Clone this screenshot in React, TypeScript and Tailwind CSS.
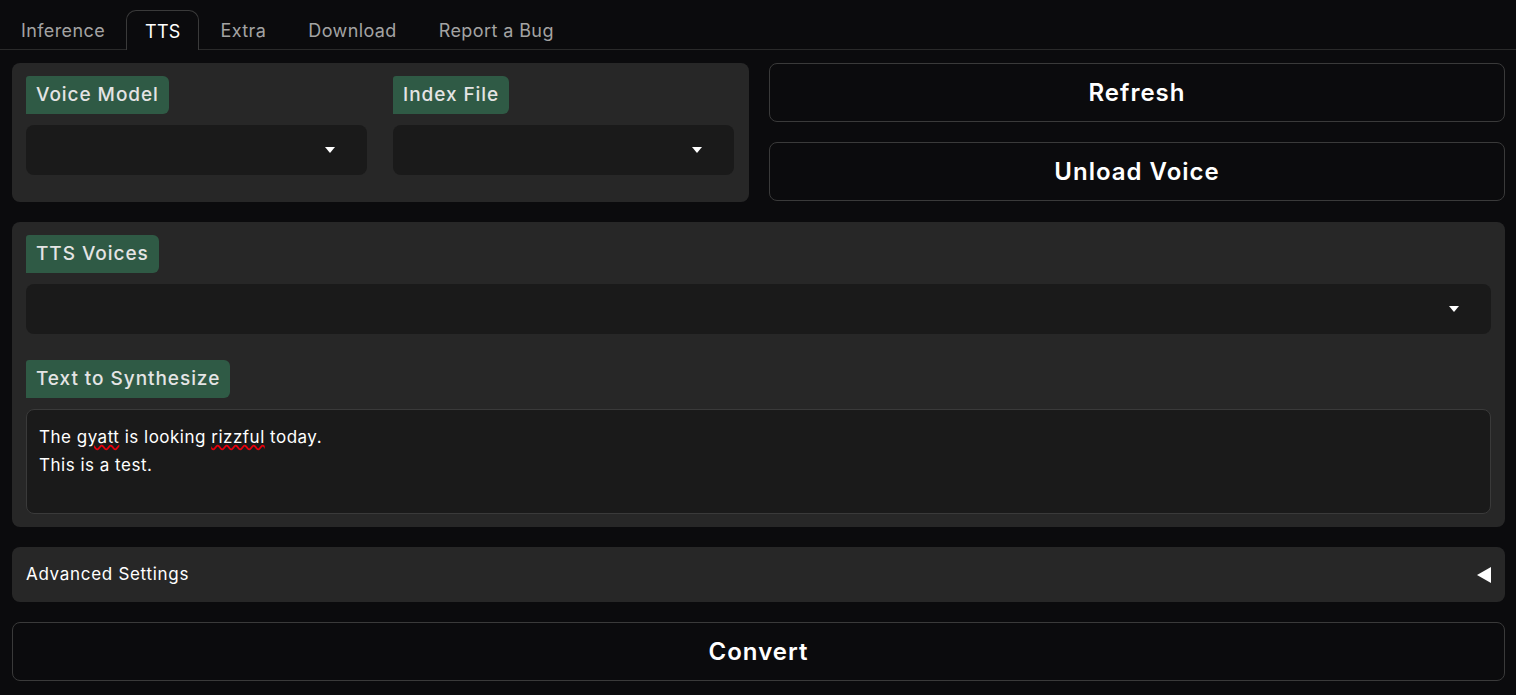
import React from "react";

const font = { fontFamily: "Inter, 'Liberation Sans', sans-serif" };

function Label({ children }: { children: React.ReactNode }) {
  return (
    <div className="inline-flex h-[38px] items-center self-start rounded-tl-[3px] rounded-r-[6px] bg-[#2f5a45] px-[10px] text-[19px] font-medium tracking-[0.95px] text-[#e4e4e4]">
      {children}
    </div>
  );
}

function Caret() {
  return (
    <svg width="10" height="6" viewBox="0 0 10 6">
      <polygon points="0,0 10,0 5,6" fill="#ffffff" />
    </svg>
  );
}

function Dropdown() {
  return (
    <div className="flex h-[50px] items-center justify-end rounded-[8px] bg-[#1a1a1a] pr-[32px]">
      <Caret />
    </div>
  );
}

const btn =
  "h-[59px] rounded-[8px] border border-[#3a3a3a] bg-[#0b0b0d] text-[24px] font-semibold tracking-[1px] text-white";

export default function App() {
  const tabs = ["Inference", "TTS", "Extra", "Download", "Report a Bug"];
  return (
    <div className="min-h-[695px] w-full bg-[#0b0b0d] text-white" style={font}>
      <div className="flex h-[50px] items-end border-b border-[#2a2a2a] pl-0">
        {tabs.map((t) =>
          t === "TTS" ? (
            <div
              key={t}
              className="relative -mb-px flex h-[40px] items-center rounded-t-[10px] border border-b-0 border-[#3a3a3a] bg-[#0b0b0d] px-[18px] pt-[2px] text-[18px] tracking-[0.2px] text-white"
            >
              {t}
            </div>
          ) : (
            <div key={t} className="flex h-[40px] items-center px-[21px] pt-[2px] text-[18px] tracking-[0.4px] text-[#a3a3a3]">
              {t}
            </div>
          )
        )}
      </div>

      <div className="flex flex-col gap-[20px] pl-[12px] pr-[11px] pt-[13px]">
        <div className="flex gap-[20px]">
          <div className="grid h-[139px] w-[737px] grid-cols-2 gap-x-[26px] rounded-[8px] bg-[#272727] pl-[14px] pr-[15px] pt-[13px]">
            <div className="flex flex-col gap-[11px]">
              <Label>Voice Model</Label>
              <Dropdown />
            </div>
            <div className="flex flex-col gap-[11px]">
              <Label>Index File</Label>
              <Dropdown />
            </div>
          </div>
          <div className="flex flex-1 flex-col gap-[20px]">
            <button className={btn}>Refresh</button>
            <button className={btn}>Unload Voice</button>
          </div>
        </div>

        <div className="flex flex-col rounded-[8px] bg-[#272727] px-[14px] pb-[13px] pt-[13px]">
          <Label>TTS Voices</Label>
          <div className="mt-[11px]">
            <Dropdown />
          </div>
          <div className="mt-[26px] flex">
            <Label>Text to Synthesize</Label>
          </div>
          <div className="mt-[11px] h-[105px] rounded-[8px] border border-[#3a3a3a] bg-[#1a1a1a] px-[12px] pt-[13px] text-[17px] leading-[28px] tracking-[0.5px] text-white">
            <div>
              The <span className="underline decoration-wavy decoration-red-600">gyatt</span> is looking{" "}
              <span className="underline decoration-wavy decoration-red-600">rizzful</span> today.
            </div>
            <div>This is a test.</div>
          </div>
        </div>

        <div className="flex h-[55px] items-center justify-between rounded-[8px] bg-[#272727] pl-[14px] pr-[14px] text-[17px] tracking-[0.7px] text-white">
          <span>Advanced Settings</span>
          <svg width="14" height="16" viewBox="0 0 14 16">
            <polygon points="14,0 14,16 0,8" fill="#ffffff" />
          </svg>
        </div>

        <button className={btn}>Convert</button>
      </div>
    </div>
  );
}
